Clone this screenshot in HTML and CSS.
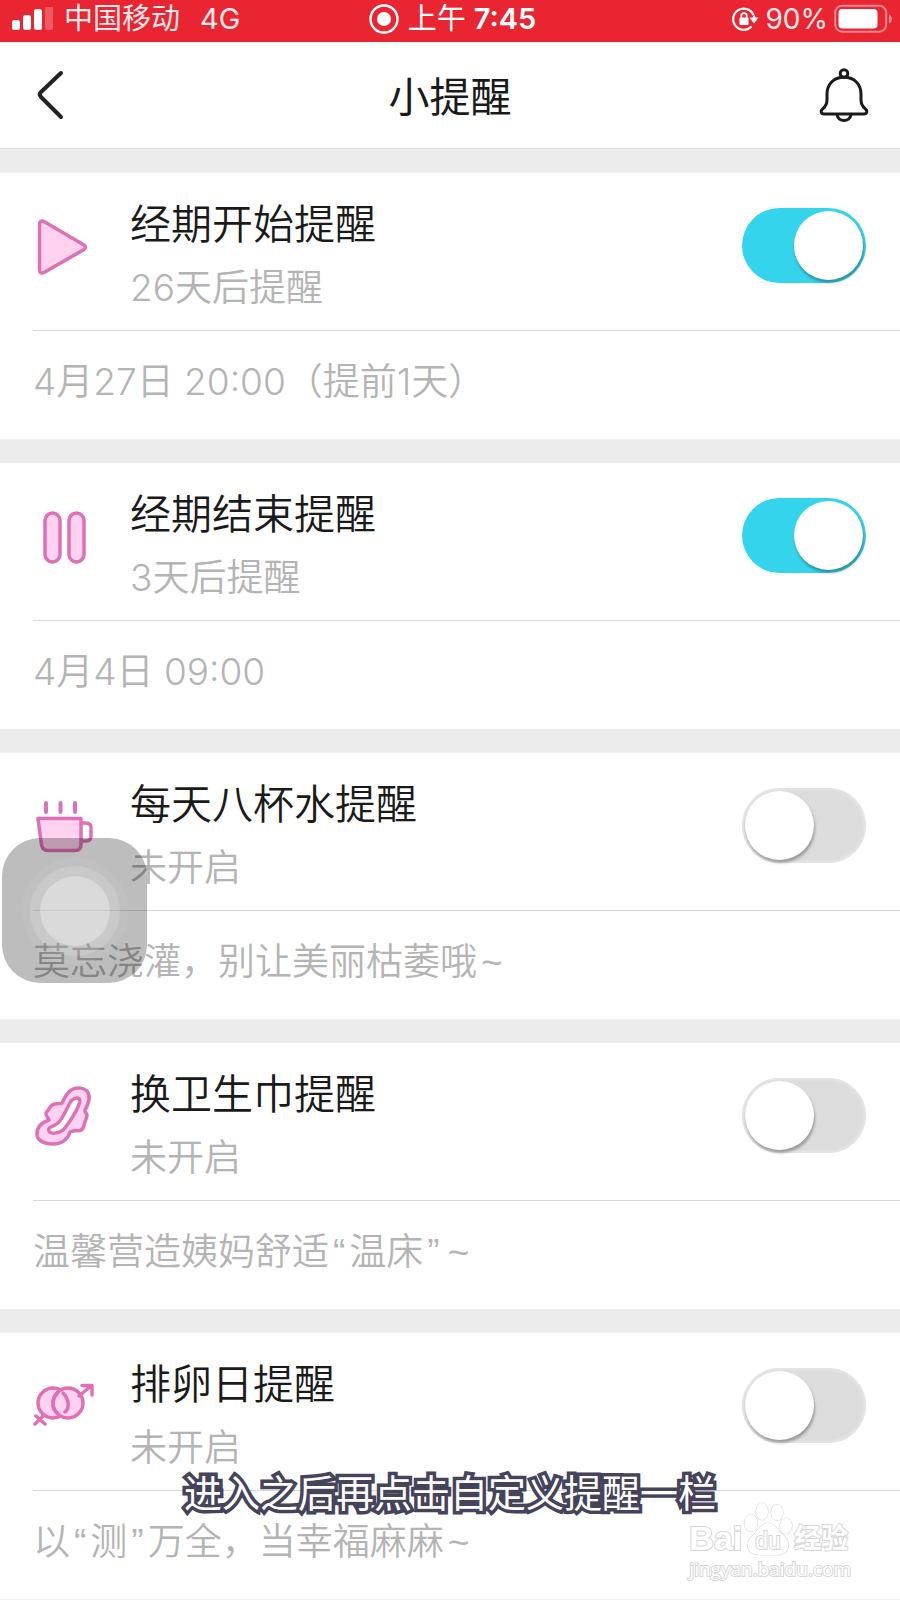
FILE: index.html
```html
<!DOCTYPE html>
<html lang="zh-CN">
<head>
<meta charset="utf-8">
<meta name="viewport" content="width=device-width, initial-scale=1">
<title>小提醒</title>
<link rel="stylesheet" href="styles.css">
</head>
<body>
<div class="screen">
  <div class="status">
    <div class="status-side">
      <svg class="signal" width="42" height="24" viewBox="0 0 42 24" fill="#fff"><rect x="0" y="13" width="8" height="10" rx="2.5"/><rect x="11" y="8" width="8" height="15" rx="2.5"/><rect x="22" y="2" width="8" height="21" rx="2.5"/><rect x="33" y="-2" width="8" height="25" rx="2.5" opacity=".25"/></svg>
      <span>中国移动</span><span class="network">4G</span>
    </div>
    <div class="status-time">
      <svg width="32" height="32" viewBox="0 0 32 32"><circle cx="16" cy="16" r="13.5" fill="none" stroke="#fff" stroke-width="2.4"/><circle cx="16" cy="16" r="7" fill="#fff"/></svg>
      <span>上午 <span class="clock">7:45</span></span>
    </div>
    <div class="status-side status-right">
      <svg width="28" height="28" viewBox="0 0 28 28"><path d="M22.500 10A10.600 10.600 0 1 0 20.500 21.500M22.700 10.500q.8 1.500.8 3.500" fill="none" stroke="#fff" stroke-width="2.200"/><path d="M18.500 12.500h9l-4.500 6z" fill="#fff"/><rect x="8.500" y="12.500" width="9" height="7.500" rx="1" fill="#fff"/><path d="M10.300 13v-2.200a2.700 2.700 0 0 1 5.400 0V13" fill="none" stroke="#fff" stroke-width="1.800"/></svg>
      <span class="percent">90%</span>
      <svg width="58" height="30" viewBox="0 0 58 30"><rect x="1.200" y="1.700" width="51" height="26" rx="7" fill="none" stroke="#fff" stroke-width="2" opacity=".45"/><rect x="4.500" y="5" width="39" height="19.500" rx="4" fill="#fff"/><path d="M55 10.500q3 1.500 3 4.500t-3 4.500z" fill="#fff" opacity=".45"/></svg>
    </div>
  </div>

  <header class="header">
    <button class="icon-button" type="button" aria-label="返回"><svg width="50" height="56" viewBox="0 0 50 56"><path d="M30 6 10 25q-2.500 2.500 0 5L30 50" fill="none" stroke="#222" stroke-width="4" stroke-linecap="round" stroke-linejoin="round"/></svg></button>
    <h1 class="title">小提醒</h1>
    <button class="icon-button" type="button" aria-label="提醒"><svg width="50" height="56" viewBox="0 0 50 56" fill="none" stroke="#1c1c1c" stroke-width="3" stroke-linejoin="round"><circle cx="25" cy="6.500" r="3.800"/><path d="M25 10.300C14 10.300 8 18 8 27v6c0 4-1 6-4 8.500C1 44 2 47 5 47h40c3 0 4-3 1-5.500-3-2.500-4-4.500-4-8.500v-6c0-9-6-16.700-17-16.700z"/><path d="M18 47.500c1 8 13 8 14 0"/></svg></button>
  </header>

  <main class="list">
    <section class="card">
      <div class="card-main">
        <svg class="icon" viewBox="2 0 64 64"><path d="M8.500 9v46c0 2.500 2 3.800 4.500 2.500l40-23c2-1.200 2-3.300 0-4.500L13 6.500C10.500 5.200 8.500 6.500 8.500 9z"/></svg>
        <div class="text"><label class="name" for="r1">经期开始提醒</label><p class="state">26天后提醒</p></div>
        <input class="switch" id="r1" type="checkbox" role="switch" checked>
      </div>
      <p class="detail">4月27日 20:00（提前1天）</p>
    </section>

    <section class="card">
      <div class="card-main">
        <svg class="icon" viewBox="1 0 64 64"><rect x="13" y="8" width="15" height="49" rx="7.500"/><rect x="37" y="8" width="15" height="49" rx="7.500"/></svg>
        <div class="text"><label class="name" for="r2">经期结束提醒</label><p class="state">3天后提醒</p></div>
        <input class="switch" id="r2" type="checkbox" role="switch" checked>
      </div>
      <p class="detail">4月4日 09:00</p>
    </section>

    <section class="card">
      <div class="card-main">
        <svg class="icon" viewBox="1 0 64 64"><path d="M14 8v9M28.500 8v9M43 8v9" stroke-width="4"/><path d="M6 23.500h43v26c0 4-2 6-6 6H16c-4 0-6-2-6.500-6z"/><path d="M50 28h4q5 0 5 5v8q0 5-5 5h-4" fill="none"/></svg>
        <div class="text"><label class="name" for="r3">每天八杯水提醒</label><p class="state">未开启</p></div>
        <input class="switch" id="r3" type="checkbox" role="switch">
      </div>
      <p class="detail">莫忘浇灌，别让美丽枯萎哦<span class="mark">~</span></p>
    </section>

    <section class="card">
      <div class="card-main">
        <svg class="icon" viewBox="0 0 64 64"><path d="M40 4c5-2 11-1 14 2 4 5 2 12-2 19-1 3 3 3 2 6l-4 12c-2 5-7 1-13 4-2 7-8 12-17 12C10 59 4 55 4 49c0-8 6-12 12-14-1-3-4-4-3-7l5-7c3-4 7-1 11-3 3-6 6-12 11-14z"/><path d="M44 13c4 0 3 5 1 9-4 9-8 14-13 21-4 5-14 7-16 3-2-5 6-4 10-9 5-6 8-14 12-21q3-3 6-3z" fill="#fff"/></svg>
        <div class="text"><label class="name" for="r4">换卫生巾提醒</label><p class="state">未开启</p></div>
        <input class="switch" id="r4" type="checkbox" role="switch">
      </div>
      <p class="detail">温馨营造姨妈舒适<span class="mark">“</span>温床<span class="mark">”</span><span class="mark">~</span></p>
    </section>

    <section class="card">
      <div class="card-main">
        <svg class="icon" viewBox="2 0 64 64"><circle cx="22" cy="28" r="15"/><circle cx="37" cy="28" r="15"/><path d="M26.500 18C20 25 21 34 26 38M32 18C39 25 38 34 34 37" fill="none"/><path d="M48 21 60 11M51 10.500h10V20M13 40l-9 9M5 41l9 8" fill="none"/></svg>
        <div class="text"><label class="name" for="r5">排卵日提醒</label><p class="state">未开启</p></div>
        <input class="switch" id="r5" type="checkbox" role="switch">
      </div>
      <p class="detail">以<span class="mark">“</span>测<span class="mark">”</span>万全，当幸福麻麻<span class="mark">~</span></p>
    </section>
  </main>

  <button class="assist" type="button" aria-label="辅助触控"><span class="assist-dot"></span></button>
  <p class="caption">进入之后再点击自定义提醒一栏</p>
  <div class="watermark">
    <div class="wm-logo"><span class="wm-latin">Bai</span>
      <svg class="wm-paw" width="50" height="54" viewBox="0 0 50 54" fill="#fff" stroke="#d6d6d6" stroke-width="1.200"><ellipse cx="8" cy="21" rx="6.500" ry="8.500"/><ellipse cx="19" cy="9.500" rx="6" ry="8.500"/><ellipse cx="34" cy="10.500" rx="6" ry="8"/><ellipse cx="43" cy="24" rx="6" ry="8"/><path d="M25 21c6 0 9 6 13 10 5 4 9 9 7 15-2 7-9 7-20 7s-18 0-20-7c-2-6 3-11 7-15 4-4 7-10 13-10z"/><text class="wm-du" x="25" y="47" text-anchor="middle">du</text></svg>
      <span class="wm-cn">经验</span></div>
    <div class="wm-url">jingyan.baidu.com</div>
  </div>
</div>
</body>
</html>
```
FILE: styles.css
```css
* { box-sizing: border-box; }

body {
  margin: 0;
  background: #ececec;
  color: #1a1a1a;
  font-family: Inter, "Noto Sans CJK SC", sans-serif;
}

h1, p { margin: 0; }

button { padding: 0; border: 0; background: none; }

svg { display: block; flex: none; }

.screen { position: relative; padding-bottom: 1px; }

.status {
  display: grid;
  grid-template-columns: 1fr auto 1fr;
  align-items: center;
  height: 42px;
  padding: 0 8px 4px 12px;
  background: #e82530;
  color: #ffe9ea;
  font-size: 29px;
  line-height: 38px;
  white-space: nowrap;
}

.status-side, .status-time { display: flex; align-items: center; }
.status-side { gap: 10px; }
.status-right { justify-content: flex-end; gap: 6px; }
.percent { font-size: 28px; }
.status-time { gap: 8px; color: #fff; }
.clock { font-weight: 600; }
.network { margin-left: 10px; }

.header {
  display: grid;
  grid-template-columns: 50px 1fr 50px;
  align-items: center;
  height: 107px;
  padding: 0 31px;
  border-bottom: 1px solid #dcdcdc;
  background: #fff;
}

.title {
  padding-top: 4px;
  font-size: 41px;
  line-height: 60px;
  font-weight: 400;
  text-align: center;
}

.list {
  display: grid;
  gap: 24px;
  padding-top: 24px;
}

.card { padding-left: 33px; background: #fff; }

.card-main {
  display: flex;
  align-items: flex-start;
  gap: 33px;
  height: 158px;
  padding-right: 34px;
  border-bottom: 1px solid #d9d9d9;
}

.icon {
  width: 64px;
  height: 64px;
  margin-top: 42px;
  fill: #ffd3f0;
  stroke: #e070b4;
  stroke-width: 3.500;
  stroke-linecap: round;
  stroke-linejoin: round;
}

.text { flex: 1; padding-top: 19px; }

.name {
  display: block;
  font-size: 41px;
  line-height: 64px;
  font-weight: 350;
}

.state, .detail {
  color: #b4b4b4;
  font-size: 37px;
  line-height: 64px;
  font-weight: 350;
}

.detail { padding: 19px 0 25px; }

.mark {
  margin: 0 4px;
  font-family: "Liberation Sans", sans-serif;
  line-height: 1;
}

.switch {
  appearance: none;
  flex: none;
  width: 124px;
  height: 75px;
  margin: 35px 0 0;
  padding: 3px;
  border-radius: 38px;
  background: #dcdcdc;
  box-shadow: inset 0 0 3px 2px #e6e6e6;
}

.switch::before {
  content: "";
  display: block;
  width: 69px;
  height: 69px;
  border-radius: 50%;
  background: #fff;
  box-shadow: 1px 3px 3px rgba(0, 0, 0, 0.3);
}

.switch:checked { background: #34d4ec; box-shadow: none; }
.switch:checked::before { margin-left: auto; }

.assist {
  position: absolute;
  left: 2px;
  top: 838px;
  display: grid;
  place-items: center;
  width: 145px;
  height: 145px;
  border-radius: 38px;
  background: rgba(0, 0, 0, 0.26);
}

.assist-dot {
  width: 70px;
  height: 70px;
  border-radius: 50%;
  background: rgba(255, 255, 255, 0.44);
  box-shadow: 0 0 0 10px rgba(255, 255, 255, 0.14), 0 0 0 18px rgba(255, 255, 255, 0.06);
}

.caption {
  position: absolute;
  left: 0;
  right: 0;
  bottom: 80px;
  color: #fff;
  font-size: 38px;
  line-height: 54px;
  text-align: center;
  paint-order: stroke fill;
  -webkit-text-stroke: 7px #45445c;
  text-shadow: 2px 2px 2px rgba(69, 68, 92, 0.5);
}

.watermark {
  position: absolute;
  right: 49px;
  bottom: 18px;
  color: #fff;
  paint-order: stroke fill;
  -webkit-text-stroke: 2px #d6d6d6;
  white-space: nowrap;
}

.wm-logo { display: flex; align-items: flex-end; gap: 1px; }
.wm-latin { font-size: 34px; line-height: 36px; font-weight: 700; font-family: "Liberation Sans", sans-serif; }
.wm-cn { font-size: 27px; line-height: 34px; font-weight: 700; }
.wm-du { font-size: 23px; font-family: "Liberation Sans", sans-serif; stroke-width: 2; }
.wm-url { font-size: 19px; line-height: 26px; font-family: "Open Sans", sans-serif; }
```
